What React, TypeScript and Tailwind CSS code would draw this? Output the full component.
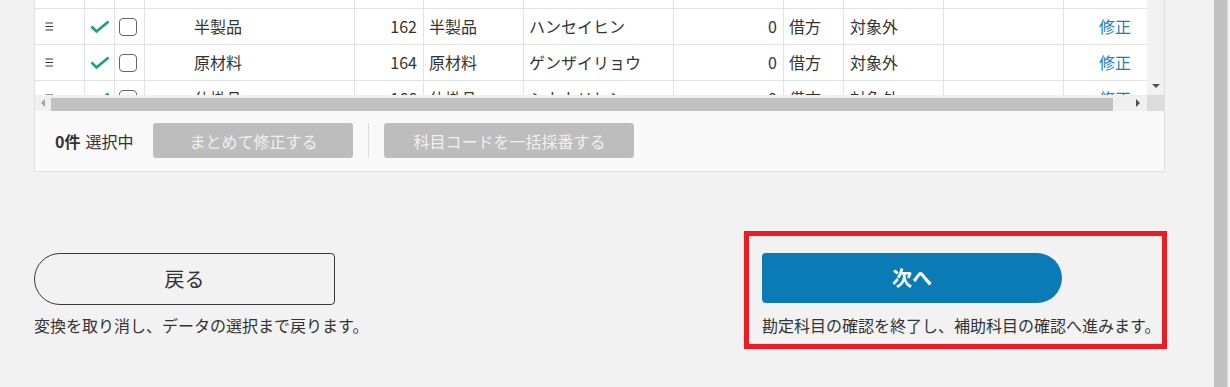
import React from "react";

const font = { fontFamily: '"Noto Sans CJK JP", "Noto Sans", sans-serif' };

type Row = { name: string; code: string; name2: string; kana: string };
const rows: Row[] = [
  { name: "製品", code: "160", name2: "製品", kana: "セイヒン" },
  { name: "半製品", code: "162", name2: "半製品", kana: "ハンセイヒン" },
  { name: "原材料", code: "164", name2: "原材料", kana: "ゲンザイリョウ" },
  { name: "仕掛品", code: "166", name2: "仕掛品", kana: "シカカリヒン" },
];

function MenuIcon() {
  return (
    <svg width="9" height="9" viewBox="0 0 9 9">
      <line x1="0.5" y1="1" x2="8" y2="1" stroke="#333" strokeWidth="1" />
      <line x1="0.5" y1="4.5" x2="8" y2="4.5" stroke="#333" strokeWidth="1" />
      <line x1="0.5" y1="8" x2="8" y2="8" stroke="#333" strokeWidth="1" />
    </svg>
  );
}

function Check() {
  return (
    <svg width="20" height="14" viewBox="0 0 20 14">
      <path d="M1.5 6.5 L6.5 11.5 L18.5 1.5" fill="none" stroke="#17a37a" strokeWidth="2.6" />
    </svg>
  );
}

function TableRow({ r }: { r: Row }) {
  return (
    <div className="flex h-[36px] border-b border-[#e2e2e2] bg-white text-[16px] leading-[20px] text-[#333] whitespace-nowrap">
      <div className="w-[50px] shrink-0 border-r border-[#e2e2e2] flex items-center pl-[10px]">
        <MenuIcon />
      </div>
      <div className="w-[30px] shrink-0 border-r border-[#e2e2e2] flex items-center justify-center">
        <Check />
      </div>
      <div className="w-[30px] shrink-0 border-r border-[#e2e2e2] flex items-center pl-[4px]">
        <div className="w-[18px] h-[18px] rounded-[4px] border-[1.5px] border-[#666] bg-white" />
      </div>
      <div className="w-[210px] shrink-0 border-r border-[#e2e2e2] flex items-center pl-[49px] pb-[2px]">{r.name}</div>
      <div className="w-[69px] shrink-0 border-r border-[#e2e2e2] flex items-center justify-end pr-[6px] pb-[2px]">{r.code}</div>
      <div className="w-[100px] shrink-0 border-r border-[#e2e2e2] flex items-center pl-[5px] pb-[2px]">{r.name2}</div>
      <div className="w-[150px] shrink-0 border-r border-[#e2e2e2] flex items-center pl-[5px] pb-[2px]">{r.kana}</div>
      <div className="w-[110px] shrink-0 border-r border-[#e2e2e2] flex items-center justify-end pr-[6px] pb-[2px]">0</div>
      <div className="w-[60px] shrink-0 border-r border-[#e2e2e2] flex items-center pl-[5px] pb-[2px]">借方</div>
      <div className="w-[100px] shrink-0 border-r border-[#e2e2e2] flex items-center pl-[6px] pb-[2px]">対象外</div>
      <div className="w-[120px] shrink-0 border-r border-[#e2e2e2]" />
      <div className="w-[100px] shrink-0 border-r border-[#e2e2e2] flex items-center pl-[35px] pb-[2px] text-[#1a7fc0]">修正</div>
    </div>
  );
}

export default function App() {
  return (
    <div className="w-[1230px] h-[387px] bg-[#f2f2f2] flex overflow-hidden text-[#333]" style={font}>
      <div className="w-[1214px] shrink-0 pl-[34px]">
        {/* panel */}
        <div className="w-[1131px] border-l border-r border-b border-[#e0e0e0]">
          <div className="flex">
            <div className="w-[1112px] shrink-0 flex flex-col">
              <div className="h-[95px] overflow-hidden">
                <div className="mt-[-27px] w-[1200px]">
                  {rows.map((r) => (
                    <TableRow key={r.code} r={r} />
                  ))}
                </div>
              </div>
              {/* horizontal scrollbar */}
              <div className="h-[16px] bg-[#f0f0f0] flex items-center">
                <div className="w-[16px] h-full flex items-center justify-center">
                  <div className="w-0 h-0 border-y-[4px] border-y-transparent border-r-[4px] border-r-[#a3a3a3]" />
                </div>
                <div className="w-[1062px] h-[13px] mt-[2px] bg-[#c1c1c1]" />
                <div className="flex-1 h-full flex items-center justify-end pr-[7px]">
                  <div className="w-0 h-0 border-y-[4px] border-y-transparent border-l-[4px] border-l-[#505050]" />
                </div>
              </div>
            </div>
            {/* vertical scrollbar */}
            <div className="w-[17px] shrink-0 flex flex-col">
              <div className="h-[95px] bg-[#f1f1f1] flex flex-col justify-end items-center pb-[7px]">
                <div className="w-0 h-0 border-x-[4px] border-x-transparent border-t-[4px] border-t-[#505050]" />
              </div>
              <div className="h-[16px] bg-[#dcdcdc]" />
            </div>
          </div>
          {/* footer */}
          <div className="h-[60px] bg-[#f9f9f9] flex items-center pl-[20px] pb-[1px] text-[16px] text-[#333] whitespace-nowrap">
            <span className="font-bold">0件</span>
            <span className="ml-[5px]">選択中</span>
            <div className="ml-[20px] w-[200px] h-[35px] rounded-[3px] bg-[#bdbdbd] text-[#f0f0f0] text-[16px] flex items-center justify-center">
              まとめて修正する
            </div>
            <div className="mx-[15px] w-px h-[35px] bg-[#dcdcdc]" />
            <div className="w-[250px] h-[35px] rounded-[3px] bg-[#bdbdbd] text-[#f0f0f0] text-[16px] flex items-center justify-center">
              科目コードを一括採番する
            </div>
          </div>
        </div>

        {/* bottom actions */}
        <div className="mt-[59px] flex items-start">
          <div className="w-[301px] shrink-0 pt-[22px] flex flex-col">
            <button className="w-[301px] h-[52px] border border-[#3a3a3a] rounded-l-[26px] rounded-r-[4px] text-[20px] text-[#333] flex items-center justify-center">
              戻る
            </button>
            <div className="mt-[9px] text-[16px] leading-[22px] text-[#333] whitespace-nowrap">
              変換を取り消し、データの選択まで戻ります。
            </div>
          </div>
          <div className="ml-[409px] w-[423px] h-[118px] shrink-0 border-[5px] border-[#ed1c24] pt-[17px] pl-[13px]">
            <button className="w-[300px] h-[50px] bg-[#0b7bb6] rounded-l-[4px] rounded-r-[25px] text-white font-bold text-[20px] flex items-center justify-center">
              次へ
            </button>
            <div className="mt-[11px] text-[16px] leading-[22px] text-[#333] whitespace-nowrap">
              勘定科目の確認を終了し、補助科目の確認へ進みます。
            </div>
          </div>
        </div>
      </div>
      {/* page scrollbar */}
      <div className="w-[16px] shrink-0 bg-[#f1f1f1] flex">
        <div className="w-[13px] h-full bg-[#c1c1c1]" />
        <div className="w-px h-full bg-[#d8d8d8]" />
      </div>
    </div>
  );
}
